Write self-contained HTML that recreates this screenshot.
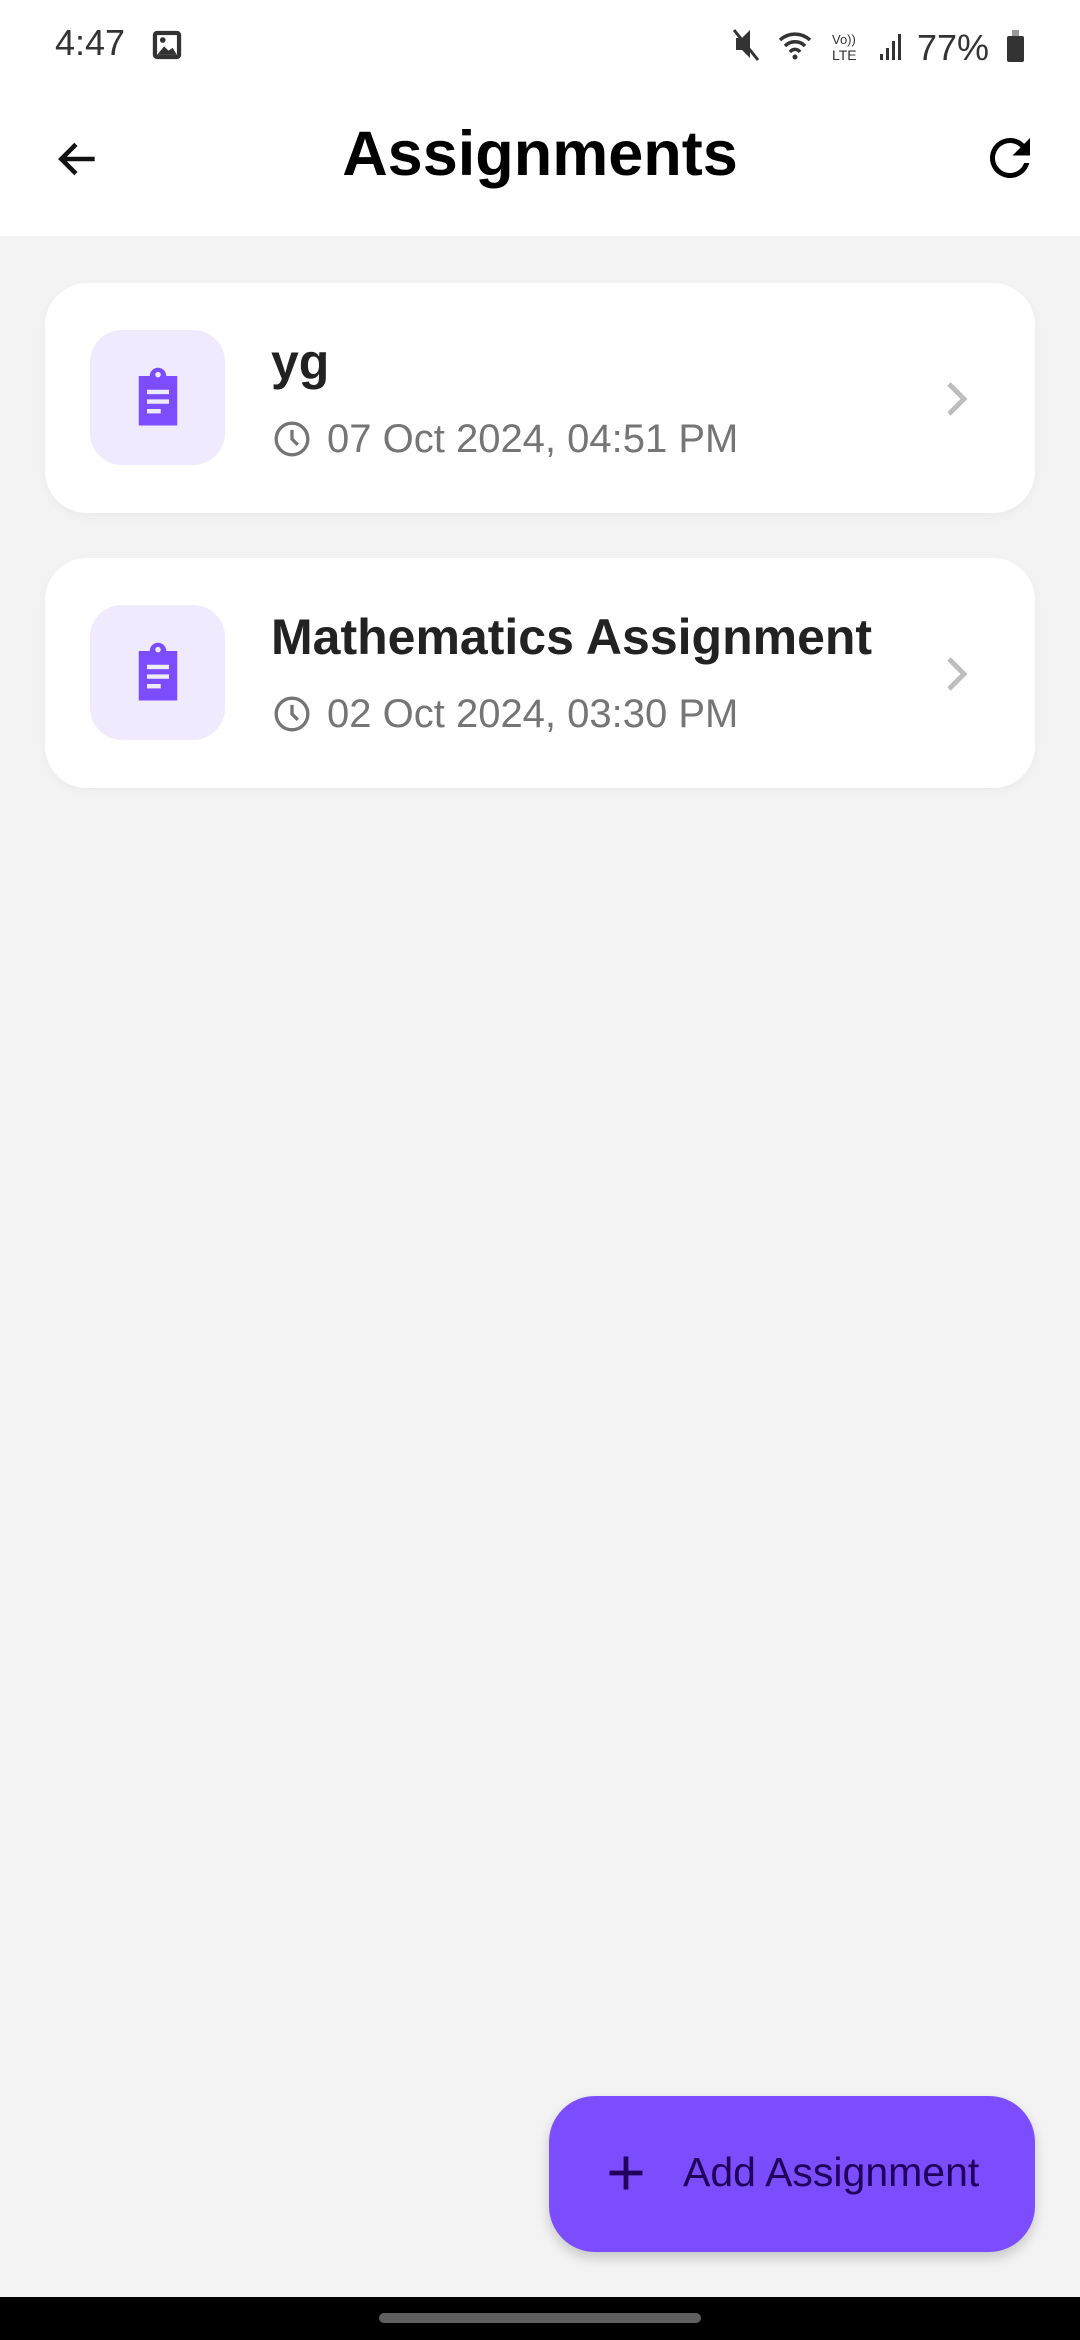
<!DOCTYPE html>
<html><head><meta charset="utf-8"><style>
*{margin:0;padding:0;box-sizing:border-box}
body{width:1080px;height:2340px;background:#f3f3f3;font-family:"Liberation Sans",sans-serif;position:relative;overflow:hidden}
.abs{position:absolute}
.status{top:0;left:0;width:1080px;height:236px;background:#fff}
.card{left:45px;width:990px;height:230px;background:#fff;border-radius:42px;box-shadow:0 3px 10px rgba(0,0,0,0.04)}
.ib{left:45px;top:47px;width:135px;height:135px;border-radius:32px;background:#efeafe}
.title{left:226px;font-weight:bold;font-size:50px;color:#222}
.date{left:282px;font-size:40px;color:#757575}
</style></head><body>
<div class="abs status"></div>
<div class="abs" style="left:55px;top:22px;font-size:36px;color:#333">4:47</div>
<svg class="abs" style="left:150px;top:28px" width="34" height="34" viewBox="0 0 24 24"><rect x="2" y="2" width="20" height="20" rx="3" fill="#333"/><rect x="5" y="5" width="14" height="14" fill="#fff"/><circle cx="9" cy="8.5" r="2" fill="#333"/><path d="M5 19l5-6 3 3 3-2 3 5z" fill="#333"/></svg>
<svg class="abs" style="left:730px;top:24px" width="300" height="42" viewBox="0 0 300 42">
<path d="M6 14h6l8-8v28l-8-8H6z" fill="#333"/><path d="M4 6l24 30" stroke="#333" stroke-width="3"/>
<path d="M50 16a22 22 0 0 1 30 0M55 22a14 14 0 0 1 20 0M60 28a6 6 0 0 1 10 0" stroke="#333" stroke-width="3.5" fill="none"/><circle cx="65" cy="33" r="2.5" fill="#333"/>
<text x="102" y="20" font-size="13" font-family="Liberation Sans" fill="#333">Vo))</text><text x="102" y="36" font-size="14" font-family="Liberation Sans" fill="#333">LTE</text>
<rect x="150" y="30" width="3" height="6" fill="#333"/><rect x="156" y="24" width="3" height="12" fill="#333"/><rect x="162" y="17" width="3" height="19" fill="#333"/><rect x="168" y="10" width="3" height="26" fill="#333"/>
<text x="187" y="36" font-size="36" font-family="Liberation Sans" fill="#333">77%</text>
<rect x="277" y="12" width="17" height="26" rx="2" fill="#333"/><rect x="282" y="6" width="7" height="6" fill="#999"/></svg>
<svg class="abs" style="left:53px;top:134px" width="50" height="50" viewBox="0 0 24 24"><path d="M20 12H5M11 5l-7 7 7 7" stroke="#111" stroke-width="2.2" fill="none"/></svg>
<div class="abs" style="left:0;width:1080px;top:118px;text-align:center;font-size:63px;font-weight:bold;color:#000">Assignments</div>
<svg class="abs" style="left:980px;top:128px" width="60" height="60" viewBox="0 0 24 24"><path d="M17.65 6.35A7.96 7.96 0 0 0 12 4a8 8 0 1 0 7.73 10h-2.08A6 6 0 1 1 12 6c1.66 0 3.14.69 4.22 1.78L13 11h7V4z" fill="#000"/></svg>

<div class="abs card" style="top:283px">
<div class="abs ib"><svg class="abs" style="left:35px;top:35px" width="66" height="66" viewBox="0 0 24 24"><path d="M5 4h4a3 3 0 0 1 6 0h4v18H5z" fill="#7c4dff"/><circle cx="12" cy="3.5" r="1" fill="#efeafe"/><rect x="8" y="9" width="8" height="1.6" fill="#efeafe"/><rect x="8" y="12.5" width="8" height="1.6" fill="#efeafe"/><rect x="8" y="16" width="5" height="1.6" fill="#efeafe"/></svg></div>
<div class="abs title" style="top:50px">yg</div>
<svg class="abs" style="left:227px;top:136px" width="40" height="40" viewBox="0 0 24 24"><circle cx="12" cy="12" r="9.5" stroke="#757575" stroke-width="2" fill="none"/><path d="M12 6.5V12l3.5 3.5" stroke="#757575" stroke-width="2" fill="none"/></svg>
<div class="abs date" style="top:134px">07 Oct 2024, 04:51 PM</div>
<svg class="abs" style="left:898px;top:98px" width="30" height="36" viewBox="0 0 10 12"><path d="M2 1l5 5-5 5" stroke="#bdbdbd" stroke-width="1.6" fill="none"/></svg>
</div>

<div class="abs card" style="top:558px">
<div class="abs ib"><svg class="abs" style="left:35px;top:35px" width="66" height="66" viewBox="0 0 24 24"><path d="M5 4h4a3 3 0 0 1 6 0h4v18H5z" fill="#7c4dff"/><circle cx="12" cy="3.5" r="1" fill="#efeafe"/><rect x="8" y="9" width="8" height="1.6" fill="#efeafe"/><rect x="8" y="12.5" width="8" height="1.6" fill="#efeafe"/><rect x="8" y="16" width="5" height="1.6" fill="#efeafe"/></svg></div>
<div class="abs title" style="top:50px">Mathematics Assignment</div>
<svg class="abs" style="left:227px;top:136px" width="40" height="40" viewBox="0 0 24 24"><circle cx="12" cy="12" r="9.5" stroke="#757575" stroke-width="2" fill="none"/><path d="M12 6.5V12l3.5 3.5" stroke="#757575" stroke-width="2" fill="none"/></svg>
<div class="abs date" style="top:134px">02 Oct 2024, 03:30 PM</div>
<svg class="abs" style="left:898px;top:98px" width="30" height="36" viewBox="0 0 10 12"><path d="M2 1l5 5-5 5" stroke="#bdbdbd" stroke-width="1.6" fill="none"/></svg>
</div>

<div class="abs" style="left:549px;top:2096px;width:486px;height:156px;border-radius:46px;background:#7c4dff;box-shadow:0 6px 12px rgba(0,0,0,0.18)"></div>
<svg class="abs" style="left:604px;top:2151px" width="44" height="44" viewBox="0 0 24 24"><path d="M12 3v18M3 12h18" stroke="#21005d" stroke-width="2.6"/></svg>
<div class="abs" style="left:683px;top:2149px;font-size:41px;color:#21005d">Add Assignment</div>

<div class="abs" style="left:0;top:2297px;width:1080px;height:43px;background:#000"></div>
<div class="abs" style="left:379px;top:2313px;width:322px;height:10px;border-radius:5px;background:#5f5f5f"></div>
</body></html>
